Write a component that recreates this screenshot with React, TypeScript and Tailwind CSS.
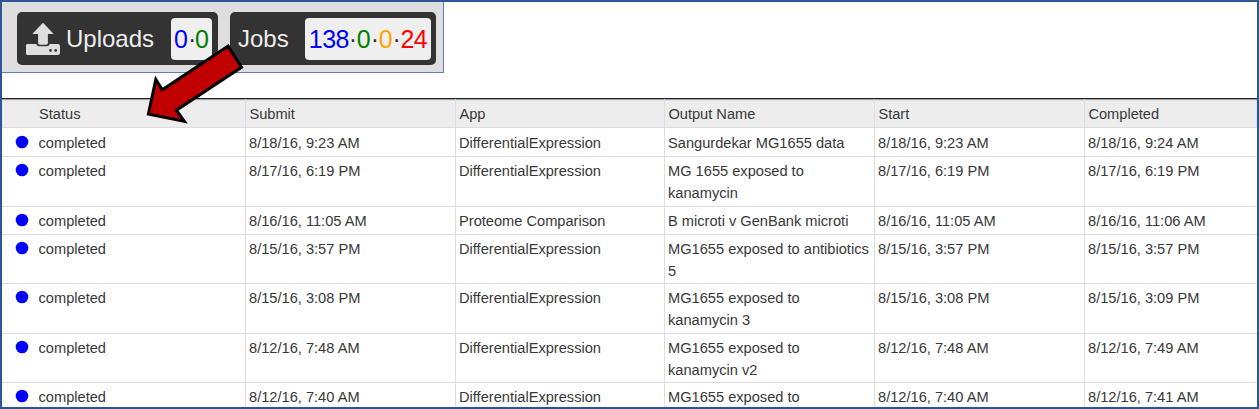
type Job = {
  submit: string;
  app: string;
  output: string[];
  start: string;
  completed: string;
  height: string;
  pad: string;
};

const jobs: Job[] = [
  { submit: '8/18/16, 9:23 AM', app: 'DifferentialExpression', output: ['Sangurdekar MG1655 data'], start: '8/18/16, 9:23 AM', completed: '8/18/16, 9:24 AM', height: 'h-[29px]', pad: 'pt-[5px]' },
  { submit: '8/17/16, 6:19 PM', app: 'DifferentialExpression', output: ['MG 1655 exposed to', 'kanamycin'], start: '8/17/16, 6:19 PM', completed: '8/17/16, 6:19 PM', height: 'h-[50px]', pad: 'pt-1' },
  { submit: '8/16/16, 11:05 AM', app: 'Proteome Comparison', output: ['B microti v GenBank microti'], start: '8/16/16, 11:05 AM', completed: '8/16/16, 11:06 AM', height: 'h-[28px]', pad: 'pt-1' },
  { submit: '8/15/16, 3:57 PM', app: 'DifferentialExpression', output: ['MG1655 exposed to antibiotics', '5'], start: '8/15/16, 3:57 PM', completed: '8/15/16, 3:57 PM', height: 'h-[49px]', pad: 'pt-1' },
  { submit: '8/15/16, 3:08 PM', app: 'DifferentialExpression', output: ['MG1655 exposed to', 'kanamycin 3'], start: '8/15/16, 3:08 PM', completed: '8/15/16, 3:09 PM', height: 'h-[50px]', pad: 'pt-1' },
  { submit: '8/12/16, 7:48 AM', app: 'DifferentialExpression', output: ['MG1655 exposed to', 'kanamycin v2'], start: '8/12/16, 7:48 AM', completed: '8/12/16, 7:49 AM', height: 'h-[49px]', pad: 'pt-1' },
  { submit: '8/12/16, 7:40 AM', app: 'DifferentialExpression', output: ['MG1655 exposed to'], start: '8/12/16, 7:40 AM', completed: '8/12/16, 7:41 AM', height: 'h-[50px]', pad: 'pt-1' },
];

const columns = 'grid grid-cols-[243px_210px_209px_210px_210px_1fr]';

function UploadIcon() {
  return (
    <svg className="h-8 w-[34px] shrink-0" viewBox="0.3 0.3 34 32" fill="#dedede">
      <path d="M17.3 0 28 11.3H22.2V20.2Q22.2 22 20.4 22H14.2Q12.4 22 12.4 20.2V11.3H6.6Z" />
      <path
        fillRule="evenodd"
        d="M2 21.4H10.5Q11 23.6 13.5 23.6H21Q23.5 23.6 24 21.4H32.3Q34.3 21.4 34.3 23.4V30.3Q34.3 32.3 32.3 32.3H2Q0 32.3 0 30.3V23.4Q0 21.4 2 21.4ZM24.8 26.3a1.4 1.4 0 1 0 0 2.8 1.4 1.4 0 0 0 0-2.8ZM30 26.3a1.4 1.4 0 1 0 0 2.8 1.4 1.4 0 0 0 0-2.8Z"
      />
    </svg>
  );
}

function Toolbar() {
  return (
    <div className="flex h-[71px] w-[442px] border-r border-b border-[#5b7fb9] bg-[#dedede] pt-[10px] pl-[15px]">
      <div className="flex h-[53px] w-[201px] shrink-0 items-center rounded-[5px] bg-[#333] pl-[9px] text-[25px] leading-[30px] text-[#eee]">
        <UploadIcon />
        <span className="ml-[6px] w-[90px] text-[24px] whitespace-nowrap">Uploads</span>
        <span className="ml-[15px] flex h-[42px] w-[41px] items-center justify-center rounded-[4px] bg-[#efefef] whitespace-nowrap text-[#333]">
          <span className="text-[#0000ff]">0</span>
          <span className="w-[7px] text-center">·</span>
          <span className="text-[#008000]">0</span>
        </span>
      </div>
      <div className="ml-3 flex h-[53px] w-[206px] shrink-0 items-center rounded-[5px] bg-[#333] pl-2 text-[25px] leading-[30px] text-[#eee]">
        <span className="w-[51px] text-[24px]">Jobs</span>
        <span className="ml-4 flex h-[42px] w-[126px] items-center justify-center rounded-[4px] bg-[#efefef] whitespace-nowrap text-[#333]">
          <span className="text-[#0000ff] tracking-[-0.6px]">138</span>
          <span className="w-[8px] text-center">·</span>
          <span className="text-[#008000]">0</span>
          <span className="w-[8px] text-center">·</span>
          <span className="text-[#ffa500]">0</span>
          <span className="w-[8px] text-center">·</span>
          <span className="text-[#ff0000] tracking-[-0.6px]">24</span>
        </span>
      </div>
    </div>
  );
}

export default function App() {
  return (
    <div className="relative h-[409px] w-[1259px] overflow-hidden border-2 border-[#2f5597] bg-white font-['Liberation_Sans',Arial,sans-serif] text-[14.63px] leading-[21.6px] text-[#383838]">
      <Toolbar />
      <div className="mt-[25px] flex flex-col">
        <div className={`${columns} h-[30px] border-t border-b border-t-[#222] border-b-[#ddd] bg-[#ededed] shadow-[inset_0_1px_1px_#999]`}>
          <div className="pt-[5px] pl-[37px]">Status</div>
          {['Submit', 'App', 'Output Name', 'Start', 'Completed'].map((name) => (
            <div key={name} className="border-l border-[#ddd] pt-[5px] pl-[3.4px]">{name}</div>
          ))}
        </div>
        {jobs.map((job) => (
          <div key={job.submit} className={`${columns} border-b border-[#ddd]`}>
            <div className={`flex items-start pl-[13px] ${job.pad}`}>
              <svg className="mt-[2px] mr-[9.5px] size-[14px]" viewBox="0 0 14 14">
                <circle cx="7" cy="7" r="6.3" fill="#0000ff" />
              </svg>
              completed
            </div>
            {[[job.submit], [job.app], job.output, [job.start], [job.completed]].map((lines, i) => (
              <div key={i} className={`-mb-px border-l border-[#ddd] pl-[3px] whitespace-nowrap ${job.height} ${job.pad}`}>
                {lines.map((line) => (
                  <div key={line}>{line}</div>
                ))}
              </div>
            ))}
          </div>
        ))}
      </div>
      <svg className="absolute top-[38px] left-[138px] h-[92px] w-[112px]" viewBox="140 40 112 92">
        <path d="M148.4 114.1 155.8 79.4 162.3 89.8 228.1 46.2 241.5 67.3 176.4 110.2 184.3 121.3Z" fill="#c00000" stroke="#000" strokeWidth="3" />
      </svg>
    </div>
  );
}
